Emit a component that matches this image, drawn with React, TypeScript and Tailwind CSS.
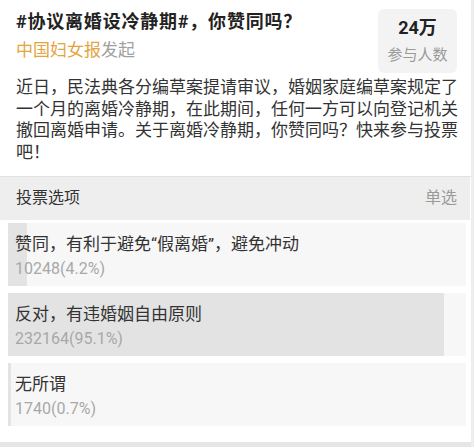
import React from 'react';

const options = [
  { label: '赞同，有利于避免“假离婚”，避免冲动', count: 10248, pct: 4.2 },
  { label: '反对，有违婚姻自由原则', count: 232164, pct: 95.1 },
  { label: '无所谓', count: 1740, pct: 0.7 },
];

const App: React.FC = () => {
  return (
    <div className="w-[474px] h-[447px] bg-white border-r-[3px] border-[#ededed] flex flex-col font-[Roboto,'Noto_Sans_CJK_SC',sans-serif] text-[#333] overflow-hidden">
      {/* header */}
      <div className="flex pl-4 pr-[14px] pt-[9px]">
        <div className="flex-1">
          <div className="text-[18px] font-bold leading-[26px] tracking-[0.8px] text-[#222]">#协议离婚设冷静期#，你赞同吗？</div>
          <div className="text-[17px] leading-[24px] mt-[3px]">
            <span className="text-[#e4a43e]">中国妇女报</span>
            <span className="text-[#a0a0a0]">发起</span>
          </div>
        </div>
        <div className="w-[79px] h-[64px] rounded-md bg-[#f3f3f3] flex flex-col items-center justify-center">
          <div className="text-[18px] font-bold leading-[24px] text-[#222]">24万</div>
          <div className="text-[15px] leading-[22px] text-[#9a9a9a] mt-[4px]">参与人数</div>
        </div>
      </div>

      <p className="pl-4 pr-[12px] mt-[4px] text-[17px] leading-[21.7px] text-[#333]">
        近日，民法典各分编草案提请审议，婚姻家庭编草案规定了一个月的离婚冷静期，在此期间，任何一方可以向登记机关撤回离婚申请。关于离婚冷静期，你赞同吗？快来参与投票吧！
      </p>

      {/* vote */}
      <div className="mt-[12px] border-t border-[#e2e2e2]">
        <div className="h-[43px] bg-[#eeeeee] flex items-center justify-between pl-4 pr-[13px] mr-[1px]">
          <span className="text-[16px] text-[#333]">投票选项</span>
          <span className="text-[16px] text-[#9a9a9a]">单选</span>
        </div>
        <div className="flex flex-col gap-[7px] pl-2 pr-[5px] pt-[3px]">
          {options.map((o) => (
            <div key={o.label} className="relative h-[63px] bg-[#f7f7f7]">
              <div className="absolute inset-y-0 left-0 bg-[#e3e3e3]" style={{ width: `${o.pct}%` }} />
              <div className="relative pl-[7px] pt-[9px]">
                <div className="text-[17px] leading-[24px] text-[#333]">{o.label}</div>
                <div className="text-[16px] leading-[22px] mt-[2px] text-[#a8a8a8]">
                  {o.count}({o.pct}%)
                </div>
              </div>
            </div>
          ))}
        </div>
      </div>
      <div className="flex-1" />
      <div className="h-[5px] bg-[#e6e6e6]" />
    </div>
  );
};

export default App;
